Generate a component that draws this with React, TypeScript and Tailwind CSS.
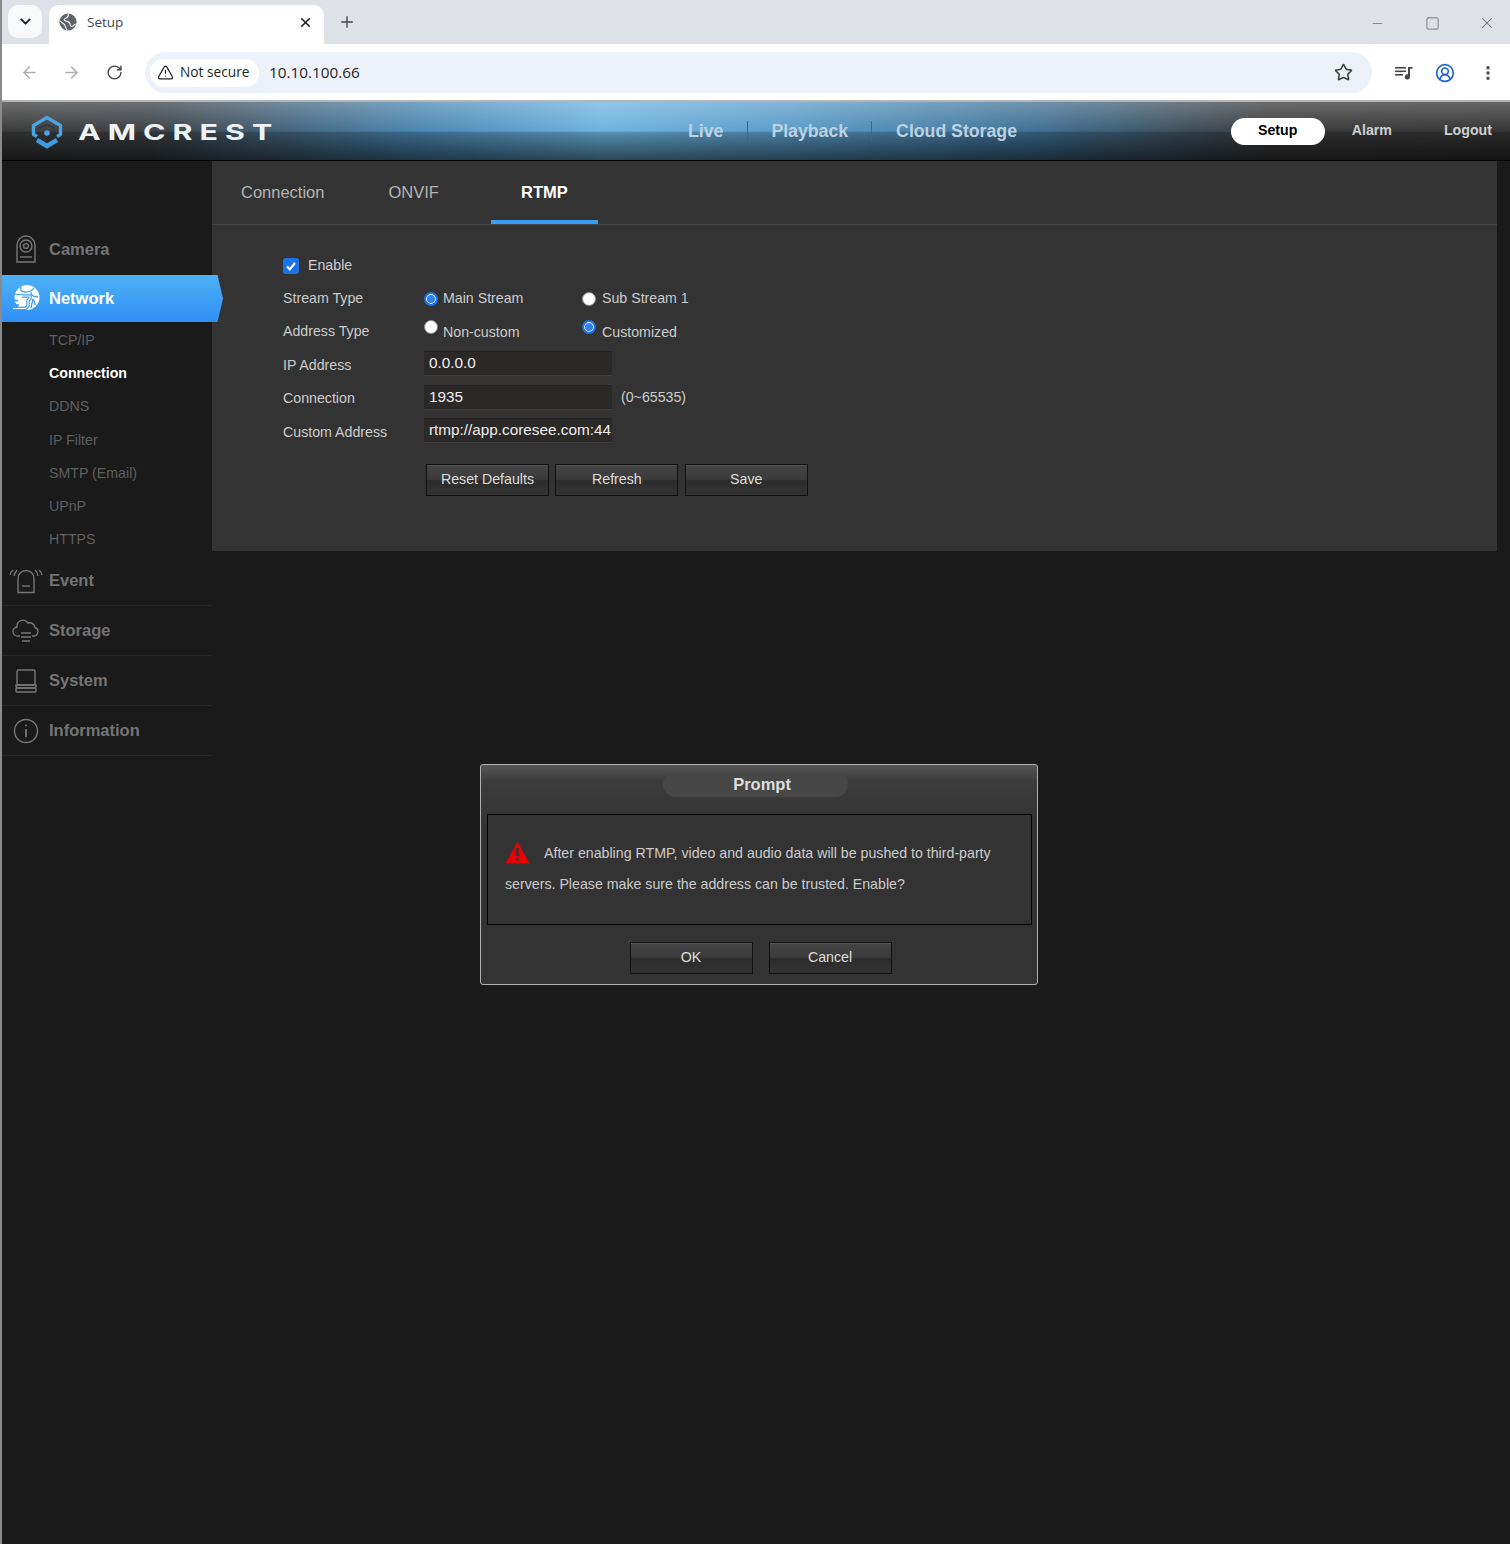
import React from 'react'
import { ArrowLeft, ArrowRight, ChevronDown, Minus, Plus, RotateCw, Square, Star, TriangleAlert, X, MoreVertical, CircleUserRound } from 'lucide-react'

const subItems = ['TCP/IP', 'Connection', 'DDNS', 'IP Filter', 'SMTP (Email)', 'UPnP', 'HTTPS']

function Btn({ label }: { label: string }) {
  return (
    <button className="w-[123px] h-8 border border-[#111] bg-[linear-gradient(#454545,#3a3a3a_50%,#2c2c2c_52%,#333)] text-[14.2px] text-[#ddd] shadow-[inset_0_1px_0_#555]">
      {label}
    </button>
  )
}

function Radio({ on, className = '' }: { on?: boolean; className?: string }) {
  return on ? (
    <span className={`block w-[14px] h-[14px] rounded-full bg-[#2f7fee] border-[2px] border-[#1a73e8] shadow-[inset_0_0_0_1px_#fff] ${className}`} />
  ) : (
    <span className={`block w-[14px] h-[14px] rounded-full bg-white border border-[#888] ${className}`} />
  )
}

function Field({ value }: { value: string }) {
  return (
    <div className="w-[188px] h-[25px] -mt-[3px] bg-[#2b2828] border-t border-t-[#222] border-b border-b-[#3f3f3f] pl-[5px] text-[15.3px] leading-[22px] text-[#eee] overflow-hidden whitespace-nowrap">
      {value}
    </div>
  )
}

function Row({ label, children }: { label: string; children?: React.ReactNode }) {
  return (
    <div className="flex h-[33.4px] items-center">
      <div className="w-[141px] text-[14.2px] text-[#ccc]">{label}</div>
      {children}
    </div>
  )
}

function MenuItem({ label, icon, border = true }: { label: string; icon: React.ReactNode; border?: boolean }) {
  return (
    <div className={`flex items-center h-[50px] ${border ? 'border-b border-b-[#262626]' : ''}`}>
      <div className="w-[47px] flex justify-center">{icon}</div>
      <span className="text-[16.5px] font-bold text-[#747474]">{label}</span>
    </div>
  )
}

function AmcrestLogo() {
  return (
    <svg width="36" height="36" viewBox="0 0 36 36" fill="none" className="shrink-0">
      <path d="M8 21.5 L4.5 19.5 V10.5 L18 2.5 L31.5 10.5 V19.5 L28 21.5" stroke="#4aa3e2" strokeWidth="3.4" strokeLinejoin="round" />
      <path d="M8 25 L18 31 L28 25" stroke="#3d9be0" strokeWidth="4.6" />
      <path d="M10 13 L18 9.5 L26 13" stroke="#1f3444" strokeWidth="1" />
      <circle cx="18" cy="18" r="2.8" fill="#4aa3e2" />
    </svg>
  )
}

export default function App() {
  return (
    <div className="relative min-h-[1544px] bg-[#1a1a1a] border-l-2 border-l-[#8a8a8a] font-['Liberation_Sans',Arial,sans-serif] overflow-hidden">
      {/* browser chrome */}
      <div className="h-[44px] bg-[#dee1e6] flex items-start pl-[8px] pt-[5px] -ml-[2px]">
        <div className="w-[34px] h-[33px] bg-white/80 rounded-[10px] flex items-center justify-center">
          <ChevronDown size={17} strokeWidth={2.6} className="text-[#1f1f1f]" />
        </div>
        <div className="ml-[7px] w-[275px] h-[39px] bg-white rounded-t-[10px] flex items-center pl-[10px] pb-[5px] font-['Open_Sans',sans-serif]">
          <svg width="18" height="18" viewBox="0 0 18 18">
            <circle cx="9" cy="9" r="8.6" fill="#5f6368" />
            <path d="M1 8l4.5 3.5L7 15l1 2.5M9 1c1 2 0 3-2 4S4 7 7 8s4 1 4 3 1 3 3 2l2.5-2" fill="none" stroke="#fff" strokeWidth="1.1" />
          </svg>
          <span className="ml-[10px] text-[13.5px] text-[#45474a]">Setup</span>
          <X size={15} strokeWidth={2.6} className="ml-auto mr-[11px] text-[#1f1f1f]" />
        </div>
        <Plus size={18} strokeWidth={1.8} className="ml-[14px] mt-[8px] text-[#444746]" />
        <div className="ml-auto flex items-center text-[#70757a]">
          <Minus size={15} strokeWidth={1.3} className="mt-[9px] mr-[40px]" />
          <Square size={15} strokeWidth={1.5} className="mt-[9px] mr-[38px]" />
          <X size={18} strokeWidth={1.4} className="mt-[9px] mr-[14px]" />
        </div>
      </div>
      <div className="h-[58px] bg-white flex items-center pt-[1px] border-b-2 border-b-[#b5b5b5] -ml-[2px] pl-[2px]">
        <ArrowLeft size={19} strokeWidth={1.8} className="ml-[18px] text-[#a9acb0]" />
        <ArrowRight size={19} strokeWidth={1.8} className="ml-[23px] text-[#a9acb0]" />
        <RotateCw size={17} strokeWidth={2} className="ml-[25px] text-[#45474a]" />
        <div className="ml-[22px] w-[1227px] h-[41px] rounded-full bg-[#edf2fa] flex items-center pl-[5px]">
          <div className="h-[28px] w-[109px] bg-white rounded-full flex items-center pl-[7px] text-[#1f1f1f] font-['Open_Sans',sans-serif] text-[13.7px]">
            <TriangleAlert size={17} strokeWidth={1.7} />
            <span className="ml-[6px] whitespace-nowrap">Not secure</span>
          </div>
          <span className="ml-[10px] text-[15.3px] text-[#1f1f1f] font-['Open_Sans',sans-serif]">10.10.100.66</span>
          <Star size={19} strokeWidth={2} className="ml-auto mr-[19px] text-[#3c4043]" />
        </div>
        <svg width="20" height="18" viewBox="0 0 20 18" fill="#45474a" className="ml-[22px]">
          <rect x="1" y="3" width="11" height="1.6" />
          <rect x="1" y="6.5" width="11" height="1.6" />
          <rect x="1" y="10" width="8" height="1.6" />
          <path d="M14 3h4.5v1.8H16v8a2.6 2.6 0 1 1-2-2.5z" />
        </svg>
        <CircleUserRound size={20} strokeWidth={2} className="ml-[21px] text-[#1f66d1]" />
        <MoreVertical size={18} strokeWidth={2.6} className="ml-[24px] text-[#45474a]" />
      </div>

      {/* device header */}
      <div className="relative h-[59px] -ml-[2px] pl-[2px] flex items-center border-b border-b-black bg-[linear-gradient(rgba(0,0,0,0)_0%,rgba(0,0,0,0)_50%,rgba(0,0,0,0.22)_53%,rgba(0,0,0,0.6)_100%),linear-gradient(rgba(255,255,255,0.25),rgba(255,255,255,0)_52%),linear-gradient(90deg,#3a3a3a_0%,#3a4045_10%,#4a86b2_28%,#6cb4e0_40%,#5a9cc8_52%,#3f7196_68%,#3a3a3a_84%,#333_100%)]">
        <div className="ml-[27px] mt-[4px]"><AmcrestLogo /></div>
        <span className="ml-[13px] mt-[2px] text-[22px] font-bold tracking-[5.1px] text-[#eef2f5] font-['Inter',sans-serif] leading-none origin-left scale-x-[1.38]">AMCREST</span>
        <div className="absolute left-[688px] top-0 h-full flex items-center text-[17.7px] font-bold text-[#bcd2e2]">
          <span>Live</span>
          <span className="ml-[24px] mr-[23px] w-px h-[20px] bg-[#3e6784]" />
          <span>Playback</span>
          <span className="ml-[23px] mr-[24px] w-px h-[20px] bg-[#3e6784]" />
          <span>Cloud Storage</span>
        </div>
        <div className="ml-auto flex items-center text-[14.2px] font-bold text-[#d0d0d0]">
          <span className="w-[94px] h-[27px] rounded-full bg-white text-black flex items-center justify-center">Setup</span>
          <span className="ml-[27px]">Alarm</span>
          <span className="ml-[52px] mr-[18px]">Logout</span>
        </div>
      </div>

      <div className="flex">
        {/* sidebar */}
        <div className="relative w-[210px] shrink-0 pt-[63px]">
          <MenuItem label="Camera" border={false} icon={
            <svg width="22" height="28" viewBox="0 0 22 28" fill="none" stroke="#777" strokeWidth="1.4">
              <path d="M2 27V10a9 9 0 0 1 18 0v17z" />
              <circle cx="11" cy="11" r="6" />
              <circle cx="11" cy="11" r="2.4" />
              <path d="M5 22h12" />
            </svg>
          } />
          <div className="relative mt-[1px] h-[47px] w-[221px] bg-[linear-gradient(#4db2f5,#2f8ff5)] [clip-path:polygon(0_0,97.5%_0,100%_50%,97.5%_100%,0_100%)] flex items-center">
            <div className="w-[47px] flex justify-center">
              <svg width="28" height="28" viewBox="0 0 28 28" fill="none">
                <circle cx="15" cy="12.5" r="12.5" fill="#fff" />
                <path d="M9 1.5C8 5 9 7 13 7s7-1 9-4M3 9c3 1 5 1 7 0M19 7c0 3 2 5 7 5M20 14c2 1 3 3 3 6M21 14l-2 9M6 16l-4-1M7 20l-3 0" stroke="#3f9df5" strokeWidth="1.3" />
                <path d="M10 11h8v2.5l-2 2V19c0 3-1 4.500-4 4.500H1" stroke="#3f9df5" strokeWidth="3.4" />
                <path d="M10 11h8v2.5l-2 2V19c0 3-1 4.500-4 4.500H1" stroke="#fff" strokeWidth="1.2" />
              </svg>
            </div>
            <span className="text-[16.5px] font-bold text-white">Network</span>
          </div>
          <div className="pt-[2px]">
            {subItems.map(s => (
              <div key={s} className={`h-[33.2px] flex items-center pl-[47px] text-[14.2px] ${s === 'Connection' ? 'font-bold text-white' : 'text-[#5f5f5f]'}`}>{s}</div>
            ))}
          </div>
          <div>
            <MenuItem label="Event" icon={
              <svg width="34" height="26" viewBox="0 0 34 26" fill="none" stroke="#777" strokeWidth="1.4">
                <path d="M9 24.500V10.500a8 8 0 0 1 16 0v14z" />
                <path d="M13 18h8" />
                <path d="M1 7q.5-3 3-5M5 8q.5-3 3-6M26 2q2.500 2 3 6M30 2q2.500 2 3 5" />
              </svg>
            } />
            <MenuItem label="Storage" icon={
              <svg width="28" height="24" viewBox="0 0 28 24" fill="none" stroke="#777" strokeWidth="1.4">
                <path d="M8 17H6a4.500 4.500 0 0 1-1-9 6 6 0 0 1 11-4 5.500 5.500 0 0 1 7 4.500 4.400 4.400 0 0 1-1 8.500h-2" />
                <path d="M9 14h10M9 18h10M10 22h8" />
              </svg>
            } />
            <MenuItem label="System" icon={
              <svg width="24" height="24" viewBox="0 0 24 24" fill="none" stroke="#777" strokeWidth="1.4">
                <rect x="3" y="1" width="18" height="15" rx="1.500" />
                <path d="M2 16h20v1a2 2 0 0 1-2 2H4a2 2 0 0 1-2-2z" />
                <rect x="2" y="19" width="20" height="4" rx="1" />
              </svg>
            } />
            <MenuItem label="Information" icon={
              <svg width="26" height="26" viewBox="0 0 26 26" fill="none" stroke="#777" strokeWidth="1.4">
                <circle cx="13" cy="13" r="11.500" />
                <path d="M13 11v8" strokeWidth="1.800" />
                <circle cx="13" cy="7.500" r="1" fill="#777" stroke="none" />
              </svg>
            } />
          </div>
        </div>

        {/* content panel */}
        <div className="w-[1285px] h-[390px] bg-[#333]">
          <div className="h-[64px] border-b border-b-[#444] flex text-[16.5px] text-[#b5b5b5]">
            <div className="ml-[29px] pt-[19px]">Connection</div>
            <div className="ml-[64px] pt-[19px]">ONVIF</div>
            <div className="ml-[52px] w-[107px] h-[63px] border-b-[4px] border-b-[#3b9df0] pt-[19px] text-center font-bold text-white">RTMP</div>
          </div>
          <div className="pl-[71px] pt-[24px]">
            <div className="flex h-[33px] items-center">
              <span className="w-[16px] h-[16px] rounded-[3px] bg-[#1a73e8] flex items-center justify-center">
                <svg width="12" height="12" viewBox="0 0 12 12" fill="none" stroke="#fff" strokeWidth="2.200"><path d="M2 6.500l2.800 2.800L10 3" /></svg>
              </span>
              <span className="ml-[9px] text-[14.2px] text-[#ccc]">Enable</span>
            </div>
            <Row label="Stream Type">
              <div className="flex items-center text-[14.2px] text-[#ccc]">
                <Radio on />
                <span className="ml-[5px] w-[139px]">Main Stream</span>
                <Radio />
                <span className="ml-[6px]">Sub Stream 1</span>
              </div>
            </Row>
            <Row label="Address Type">
              <div className="flex items-center text-[14.2px] text-[#ccc]">
                <Radio className="-mt-[11px]" />
                <span className="ml-[5px] w-[139px] pt-[1px]">Non-custom</span>
                <Radio on className="-mt-[11px]" />
                <span className="ml-[6px] pt-[1px]">Customized</span>
              </div>
            </Row>
            <Row label="IP Address"><Field value="0.0.0.0" /></Row>
            <Row label="Connection">
              <Field value="1935" />
              <span className="ml-[9px] -mt-[2px] text-[14.2px] text-[#ccc]">(0~65535)</span>
            </Row>
            <Row label="Custom Address"><Field value="rtmp://app.coresee.com:44" /></Row>
            <div className="flex gap-[6.400px] pl-[143px] pt-[15px]">
              <Btn label="Reset Defaults" />
              <Btn label="Refresh" />
              <Btn label="Save" />
            </div>
          </div>
        </div>
      </div>

      {/* prompt dialog */}
      <div className="absolute left-[478px] top-[764px] w-[558px] h-[221px] rounded-[3px] border border-[#b0b0b0] bg-[linear-gradient(#555,#3c3c3c_16px,#333_60px)] pl-[6px] pr-[5px]">
        <div className="mt-[7px] ml-[176px] w-[185px] h-[25px] pl-[13px] rounded-full bg-[#474747] text-center text-[16.5px] leading-[24px] font-bold text-[#ddd]">Prompt</div>
        <div className="mt-[17px] h-[111px] border border-black bg-[#333] pl-[17px] pr-[20px] pt-[23px] text-[14.2px] leading-[31px] text-[#ccc]">
          <svg width="25" height="23" viewBox="0 0 25 23" className="inline-block mr-[14px] -mt-[4px] align-middle">
            <path d="M12.500 0.500 L24.500 22.500 H0.500 Z" fill="#e90000" />
            <rect x="11.200" y="7" width="2.600" height="8" fill="#333" />
            <rect x="11.200" y="16.500" width="2.600" height="3" fill="#333" />
          </svg>
          After enabling RTMP, video and audio data will be pushed to third-party servers. Please make sure the address can be trusted. Enable?
        </div>
        <div className="flex justify-center gap-[16px] mt-[17px] pl-[2px]">
          <Btn label="OK" />
          <Btn label="Cancel" />
        </div>
      </div>
    </div>
  )
}
